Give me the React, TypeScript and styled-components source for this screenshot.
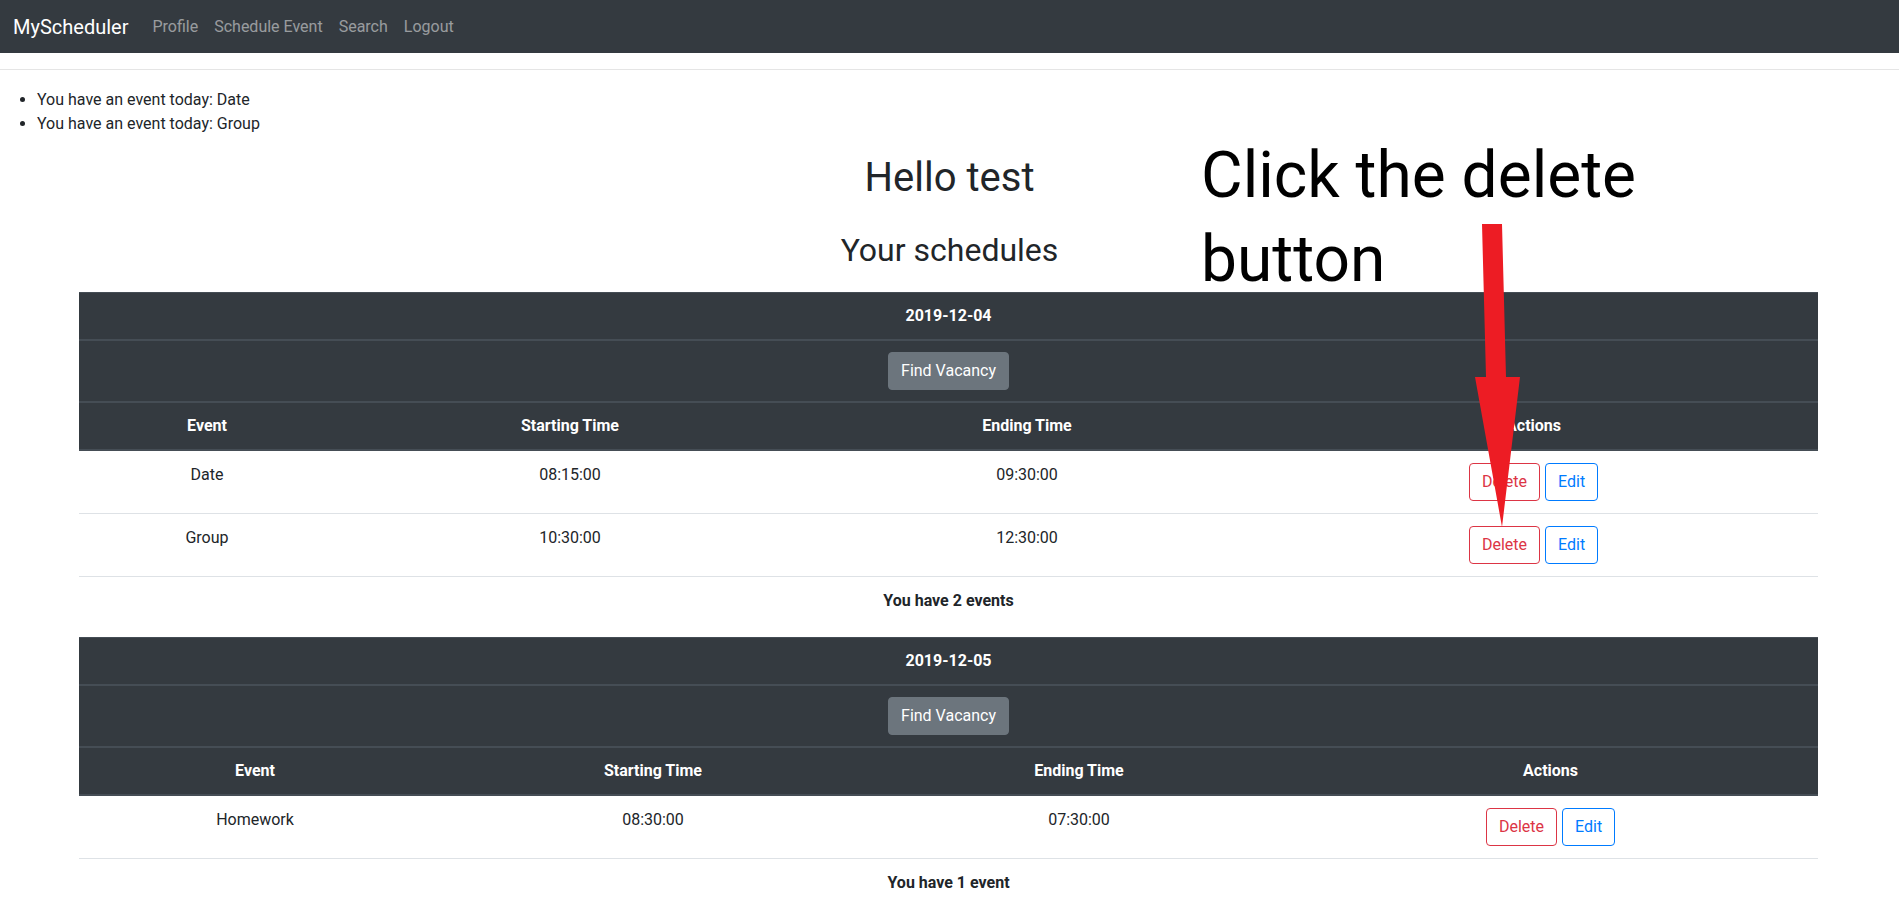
import React from "react";
import styled, { createGlobalStyle } from "styled-components";

const FONT = `"Segoe UI", Roboto, "Helvetica Neue", Arial, "Noto Sans", sans-serif`;

const GlobalStyle = createGlobalStyle`
  html { overflow: hidden; }
  body {
    margin: 0;
    font-family: ${FONT};
    font-size: 16px;
    line-height: 1.5;
    color: #212529;
    background: #fff;
  }
  * { box-sizing: border-box; }
`;

const Page = styled.div`
  position: relative;
  width: 100%;
`;

const NavBar = styled.nav`
  display: flex;
  align-items: center;
  height: 53px;
  padding: 0 13px;
  background: #343a40;
`;

const Brand = styled.a`
  font-size: 20px;
  line-height: 30px;
  color: #fff;
  margin-right: 16px;
  text-decoration: none;
`;

const NavLinks = styled.div`
  display: flex;
  align-items: center;
`;

const NavLink = styled.a`
  padding: 8px;
  color: rgba(255, 255, 255, 0.5);
  text-decoration: none;
  font-size: 16px;
  line-height: 24px;
`;

const Divider = styled.hr`
  margin: 16px 0 18px;
  border: 0;
  border-top: 1px solid rgba(0, 0, 0, 0.1);
`;

const NoticeList = styled.ul`
  margin: 0 0 14px;
  padding-left: 37px;
`;

const NoticeItem = styled.li`
  line-height: 24px;
`;

const Title = styled.h1`
  margin: 0 0 29px;
  padding-top: 4px;
  font-size: 40px;
  font-weight: 400;
  line-height: 1.2;
  text-align: center;
`;

const Subtitle = styled.h2`
  margin: 0 0 23px;
  font-size: 32px;
  font-weight: 400;
  line-height: 1.2;
  text-align: center;
`;

const ScheduleTable = styled.table`
  width: 1739px;
  margin: 0 0 13px 79px;
  border-collapse: collapse;
  table-layout: fixed;
  text-align: center;
`;

const Col = styled.col<{ $w: number }>`
  width: ${(p) => p.$w}px;
`;

const HeadCell = styled.th`
  padding: 11px 12px;
  background: #343a40;
  color: #fff;
  font-weight: 700;
  line-height: 24px;
  border-top: 1px solid #454d55;
  border-bottom: 2px solid #454d55;
  vertical-align: bottom;
`;

const BodyCell = styled.td`
  padding: 12px;
  line-height: 24px;
  vertical-align: top;
  border-top: 1px solid #dee2e6;
`;

const FooterCell = styled.td`
  padding: 12px 12px 11px;
  line-height: 24px;
  font-weight: 700;
  border-top: 1px solid #dee2e6;
`;

const VacancyButton = styled.button`
  display: inline-block;
  padding: 6px 12px;
  font-family: ${FONT};
  font-size: 16px;
  line-height: 24px;
  color: #fff;
  background: #6c757d;
  border: 1px solid #6c757d;
  border-radius: 4px;
  cursor: pointer;
`;

const ActionGroup = styled.div`
  display: inline-flex;
  gap: 5px;
`;

const OutlineButton = styled.button<{ $tone: string }>`
  padding: 6px 12px;
  font-family: ${FONT};
  font-size: 16px;
  line-height: 24px;
  color: ${(p) => p.$tone};
  background: transparent;
  border: 1px solid ${(p) => p.$tone};
  border-radius: 4px;
  cursor: pointer;
`;

const Annotation = styled.div`
  position: absolute;
  left: 1201px;
  top: 134px;
  width: 520px;
  font-family: ${FONT};
  font-size: 64px;
  line-height: 84px;
  color: #000;
  pointer-events: none;
`;

const ArrowSvg = styled.svg`
  position: absolute;
  left: 1470px;
  top: 220px;
  pointer-events: none;
`;

type Ev = { name: string; start: string; end: string };
type Schedule = { date: string; cols: number[]; events: Ev[] };

const schedules: Schedule[] = [
  {
    date: "2019-12-04",
    cols: [256, 470, 444, 569],
    events: [
      { name: "Date", start: "08:15:00", end: "09:30:00" },
      { name: "Group", start: "10:30:00", end: "12:30:00" },
    ],
  },
  {
    date: "2019-12-05",
    cols: [352, 444, 408, 535],
    events: [{ name: "Homework", start: "08:30:00", end: "07:30:00" }],
  },
];

function Table({ s }: { s: Schedule }) {
  return (
    <ScheduleTable>
      <colgroup>
        {s.cols.map((w, i) => (
          <Col key={i} $w={w} />
        ))}
      </colgroup>
      <thead>
        <tr>
          <HeadCell colSpan={4}>{s.date}</HeadCell>
        </tr>
        <tr>
          <HeadCell colSpan={4}>
            <VacancyButton>Find Vacancy</VacancyButton>
          </HeadCell>
        </tr>
        <tr>
          <HeadCell>Event</HeadCell>
          <HeadCell>Starting Time</HeadCell>
          <HeadCell>Ending Time</HeadCell>
          <HeadCell>Actions</HeadCell>
        </tr>
      </thead>
      <tbody>
        {s.events.map((e) => (
          <tr key={e.name}>
            <BodyCell>{e.name}</BodyCell>
            <BodyCell>{e.start}</BodyCell>
            <BodyCell>{e.end}</BodyCell>
            <BodyCell>
              <ActionGroup>
                <OutlineButton $tone="#dc3545">Delete</OutlineButton>
                <OutlineButton $tone="#007bff">Edit</OutlineButton>
              </ActionGroup>
            </BodyCell>
          </tr>
        ))}
      </tbody>
      <tfoot>
        <tr>
          <FooterCell colSpan={4}>
            You have {s.events.length} {s.events.length === 1 ? "event" : "events"}
          </FooterCell>
        </tr>
      </tfoot>
    </ScheduleTable>
  );
}

export default function App() {
  return (
    <Page>
      <GlobalStyle />
      <NavBar>
        <Brand>MyScheduler</Brand>
        <NavLinks>
          <NavLink>Profile</NavLink>
          <NavLink>Schedule Event</NavLink>
          <NavLink>Search</NavLink>
          <NavLink>Logout</NavLink>
        </NavLinks>
      </NavBar>
      <Divider />
      <NoticeList>
        <NoticeItem>You have an event today: Date</NoticeItem>
        <NoticeItem>You have an event today: Group</NoticeItem>
      </NoticeList>
      <Title>Hello test</Title>
      <Subtitle>Your schedules</Subtitle>
      {schedules.map((s) => (
        <Table key={s.date} s={s} />
      ))}
      <Annotation>
        Click the delete
        <br />
        button
      </Annotation>
      <ArrowSvg width="60" height="320" viewBox="0 0 60 320">
        <polygon
          points="12,4 32,4 36,157 50,157 32,307 5,157 16,157"
          fill="#ed1c24"
        />
      </ArrowSvg>
    </Page>
  );
}
